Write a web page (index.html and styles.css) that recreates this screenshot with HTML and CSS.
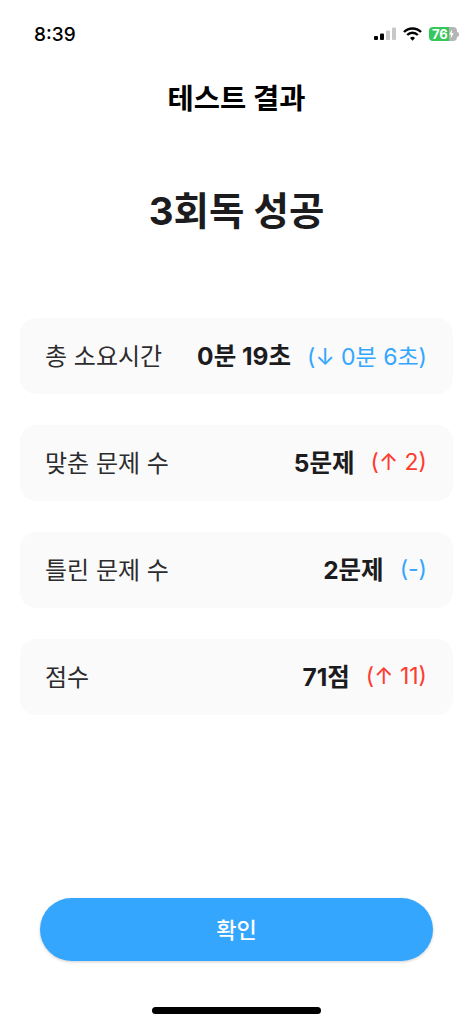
FILE: index.html
```html
<!DOCTYPE html>
<html lang="ko">
<head>
    <meta charset="UTF-8">
    <meta name="viewport" content="width=device-width, initial-scale=1.0">
    <title>테스트 결과</title>
    <link rel="stylesheet" href="styles.css">
</head>
<body>

<div class="status-bar">
    <span class="status-time">8:39</span>
    <div class="status-icons">
        <svg class="signal" width="22" height="14" viewBox="0 0 22 14">
            <rect x="0" y="9" width="4" height="4" rx="1" fill="#000"/>
            <rect x="6" y="6.500" width="4" height="6.500" rx="1" fill="#000"/>
            <rect x="12" y="3.500" width="4" height="9.500" rx="1" fill="#c8c8c8"/>
            <rect x="18" y="0.500" width="4" height="12.500" rx="1" fill="#c8c8c8"/>
        </svg>
        <svg class="wifi" width="19" height="14" viewBox="0 0 19 14">
            <path d="M1 5 A12 12 0 0 1 18 5" fill="none" stroke="#000" stroke-width="2.400"/>
            <path d="M4.200 8 A7.500 7.500 0 0 1 14.800 8" fill="none" stroke="#000" stroke-width="2.400"/>
            <path d="M7 11 L9.500 13.800 L12 11 A3.600 3.600 0 0 0 7 11 Z" fill="#000"/>
        </svg>
        <div class="battery">
            <div class="battery-body">
                <span class="battery-level">76</span>
                <svg class="bolt" width="5" height="10" viewBox="0 0 6 11">
                    <path d="M3.800 0 L0.300 6.200 H2.600 L2 11 L5.700 4.600 H3.300 Z" fill="#fff"/>
                </svg>
            </div>
            <div class="battery-cap"></div>
        </div>
    </div>
</div>

<h1 class="page-title">테스트 결과</h1>
<div class="result-title">3회독 성공</div>

<div class="cards">
    <div class="card">
        <span class="card-label">총 소요시간</span>
        <span class="card-value">0분 19초</span>
        <span class="card-diff down">(↓ 0분 6초)</span>
    </div>
    <div class="card">
        <span class="card-label">맞춘 문제 수</span>
        <span class="card-value">5문제</span>
        <span class="card-diff up">(↑ 2)</span>
    </div>
    <div class="card">
        <span class="card-label">틀린 문제 수</span>
        <span class="card-value">2문제</span>
        <span class="card-diff down">(-)</span>
    </div>
    <div class="card">
        <span class="card-label">점수</span>
        <span class="card-value">71점</span>
        <span class="card-diff up">(↑ 11)</span>
    </div>
</div>

<div class="bottom">
    <button class="confirm-button">확인</button>
    <div class="home-bar"></div>
</div>

</body>
</html>
```

FILE: styles.css
```css
body {
    margin: 0;
    height: 1024px;
    overflow: hidden;
    background: #fff;
    color: #1c1c1e;
    font-family: Inter, "Noto Sans CJK KR", sans-serif;
    display: flex;
    flex-direction: column;
}

.status-bar {
    height: 34px;
    padding: 17px 14px 0 34px;
    display: flex;
    justify-content: space-between;
    align-items: center;
    flex-shrink: 0;
}

.status-time {
    font-size: 19px;
    font-weight: 500;
    color: #000;
}

.status-icons {
    display: flex;
    align-items: center;
    gap: 7px;
}

.battery {
    display: flex;
    align-items: center;
}

.battery-body {
    width: 28px;
    height: 14px;
    border-radius: 4px;
    background: linear-gradient(90deg, #34c759 72%, #b5b5b5 72%);
    display: flex;
    align-items: center;
    padding-left: 3px;
    box-sizing: border-box;
}

.battery-level {
    font-size: 13px;
    font-weight: 700;
    color: #fff;
    line-height: 14px;
    letter-spacing: -0.2px;
    margin-right: 2px;
}

.bolt {
    flex-shrink: 0;
}

.battery-cap {
    width: 2px;
    height: 5px;
    background: #b5b5b5;
    border-radius: 0 2px 2px 0;
}

.page-title {
    margin: 27px 0 0;
    font-size: 28.500px;
    font-weight: 700;
    line-height: 42px;
    text-align: center;
    color: #000;
}

.result-title {
    margin-top: 63px;
    font-size: 38.500px;
    font-weight: 700;
    line-height: 56px;
    text-align: center;
}

.cards {
    margin: 79px 20px 0;
    display: flex;
    flex-direction: column;
    gap: 31px;
}

.card {
    height: 76px;
    padding: 0 26px 4px 25px;
    box-sizing: border-box;
    border-radius: 16px;
    background: #fafafa;
    display: flex;
    align-items: center;
    font-size: 24px;
}

.card-label {
    margin-right: auto;
    color: #2c2c2e;
}

.card-value {
    font-size: 24.500px;
    font-weight: 700;
    margin-right: 16px;
}

.card-diff {
    font-size: 23px;
    padding-top: 2px;
    color: #34a6fd;
}

.card-diff.up {
    color: #ff3b30;
}

.bottom {
    margin-top: auto;
    padding: 0 40px 10px;
    display: flex;
    flex-direction: column;
    align-items: center;
}

.confirm-button {
    width: 100%;
    height: 63px;
    padding: 0 0 4px;
    border: none;
    border-radius: 32px;
    background: #34a6fd;
    color: #fff;
    font-family: inherit;
    font-size: 22px;
    font-weight: 500;
    box-shadow: 0 1px 3px rgba(0, 0, 0, 0.2);
}

.home-bar {
    width: 169px;
    height: 7px;
    margin-top: 46px;
    border-radius: 4px;
    background: #000;
}
```
